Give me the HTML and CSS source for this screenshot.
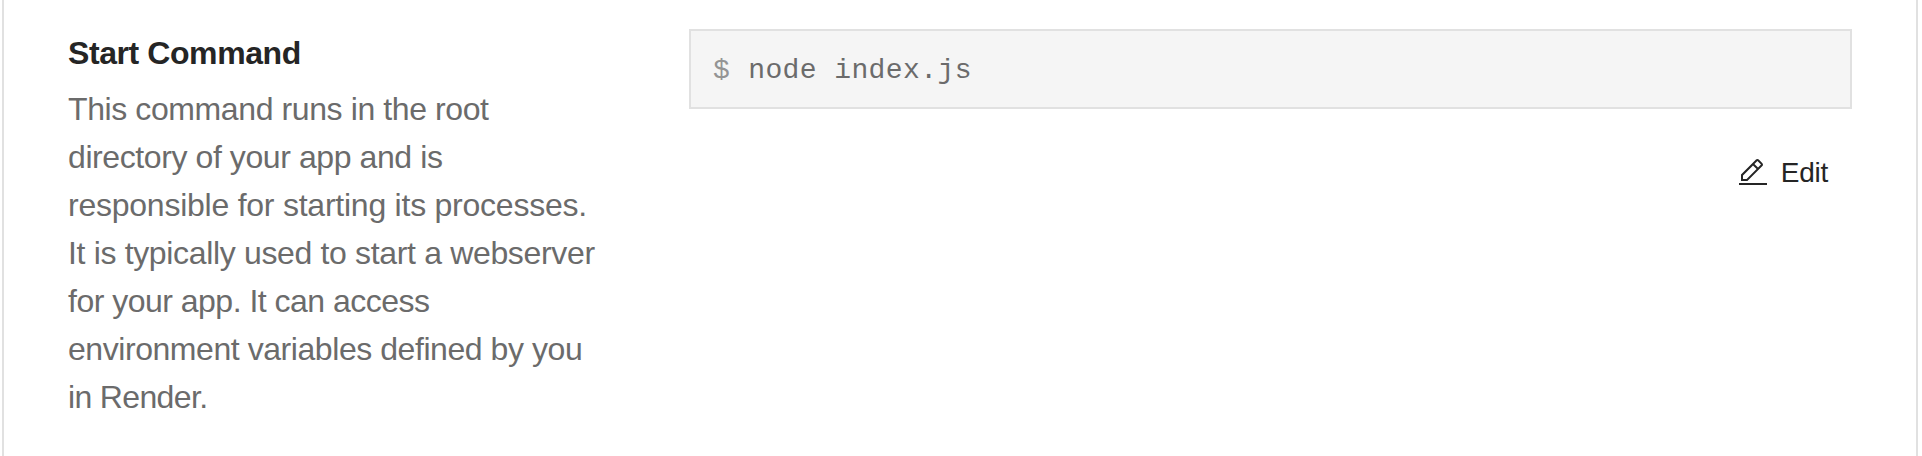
FILE: index.html
```
<!DOCTYPE html>
<html lang="en">
<head>
<meta charset="utf-8">
<title>Start Command</title>
<link rel="stylesheet" href="styles.css">
</head>
<body>
<main class="card">
  <section class="info">
    <h2 class="title">Start Command</h2>
    <p class="description"><span class="l1">This command runs in the root</span><br><span class="l2">directory of your app and is</span><br><span class="l3">responsible for starting its processes.</span><br><span class="l4">It is typically used to start a webserver</span><br><span class="l5">for your app. It can access</span><br><span class="l6">environment variables defined by you</span><br><span class="l7">in Render.</span></p>
  </section>
  <section class="setting">
    <div class="command"><span class="prompt">$</span><code class="value">node index.js</code></div>
    <button class="edit" type="button">
      <svg class="icon" viewBox="0 0 32 32" fill="currentColor" aria-hidden="true"><path d="M2 26h28v2H2zM25.4 9c.8-.8.8-2 0-2.8l-3.6-3.6c-.8-.8-2-.8-2.8 0l-15 15V24h6.4l15-15zm-5-5L24 7.6l-3 3L17.4 7l3-3zM6 22v-3.6l10-10 3.6 3.6-10 10H6z"/></svg>
      <span class="label">Edit</span>
    </button>
  </section>
</main>
</body>
</html>
```
FILE: styles.css
```
* { box-sizing: border-box; }
body {
  margin: 0;
  background: #fff;
  font-family: "Liberation Sans", Arial, sans-serif;
  overflow: hidden;
}
.card {
  display: grid;
  grid-template-columns: 557px 1163px;
  column-gap: 64px;
  width: 1916px;
  height: 456px;
  margin-left: 2px;
  padding: 29px 0 0 64px;
  border: solid #e1e1e1;
  border-width: 0 2px;
}
.title {
  margin: 0;
  font-size: 32px;
  line-height: 48px;
  color: #252525;
  letter-spacing: -0.42px;
}
.description {
  margin: 8px 0 0;
  font-size: 32px;
  line-height: 48px;
  color: #6b6b6b;
  white-space: nowrap;
}
.l1 { letter-spacing: -0.4px; }
.l2 { letter-spacing: -0.41px; }
.l3 { letter-spacing: -0.24px; }
.l4 { letter-spacing: -0.34px; }
.l5 { letter-spacing: -0.51px; }
.l6 { letter-spacing: -0.44px; }
.l7 { letter-spacing: -0.65px; }
.setting {
  display: flex;
  flex-direction: column;
  align-items: flex-end;
}
.command {
  display: flex;
  gap: 18px;
  width: 100%;
  height: 80px;
  padding: 2px 0 0 22px;
  border: 2px solid #e1e1e1;
  background: #f5f5f5;
  font: 28px/76px "Liberation Mono", monospace;
  letter-spacing: 0.4px;
  color: #6b6b6b;
}
.prompt { color: #949494; }
.value { font: inherit; }
.edit {
  display: flex;
  align-items: center;
  gap: 12px;
  height: 80px;
  margin-top: 24px;
  padding: 0 24px 0 0;
  border: 0;
  background: none;
  font: 28px/40px "Liberation Sans", Arial, sans-serif;
  letter-spacing: -0.25px;
  color: #252525;
}
.icon { width: 32px; height: 32px; }
```
